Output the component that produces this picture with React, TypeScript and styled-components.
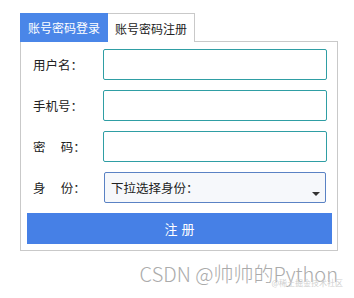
import React from "react";
import styled, { createGlobalStyle } from "styled-components";

const GlobalStyle = createGlobalStyle`
  html, body {
    margin: 0;
    padding: 0;
    background: #fff;
    font-family: "Noto Sans CJK SC", "Noto Sans", sans-serif;
  }
`;

const Page = styled.div({
  width: "354px",
  height: "298px",
  padding: "13px 16px 0 20px",
  boxSizing: "border-box",
  position: "relative",
});

const TabBar = styled.div({
  display: "flex",
  height: "29px",
});

const Tab = styled.div<{ $active?: boolean }>((p) => ({
  width: p.$active ? "88px" : "87px",
  boxSizing: "border-box",
  display: "flex",
  alignItems: "center",
  justifyContent: "center",
  fontSize: "12px",
  color: p.$active ? "#fff" : "#222",
  background: p.$active ? "#4a86e8" : "#fff",
  border: p.$active ? "none" : "1px solid #c9c9c9",
  borderBottom: "none",
  borderLeft: "none",
}));

const TabFill = styled.div({
  flex: 1,
  borderBottom: "1px solid #c9c9c9",
});

const Panel = styled.div({
  border: "1px solid #c9c9c9",
  borderTop: "none",
  padding: "7px 5px 6px 0",
  display: "flex",
  flexDirection: "column",
  gap: "10px",
});

const Row = styled.div({
  display: "flex",
  alignItems: "center",
  height: "31px",
});

const Label = styled.label({
  width: "82px",
  boxSizing: "border-box",
  paddingLeft: "12px",
  fontSize: "12.5px",
  color: "#222",
  whiteSpace: "pre",
});

const Input = styled.input({
  width: "224px",
  height: "31px",
  boxSizing: "border-box",
  border: "1px solid #2f9ea4",
  borderRadius: "2px",
  outline: "none",
  padding: "0 6px",
});

const SelectBox = styled.div({
  position: "relative",
  marginLeft: "1px",
  width: "222px",
  height: "31px",
  boxSizing: "border-box",
  border: "1px solid #5a82c4",
  borderRadius: "2px",
  background: "#f6f8fb",
  display: "flex",
  alignItems: "center",
  paddingLeft: "6px",
  fontSize: "12.5px",
  color: "#222",
});

const Caret = styled.span({
  position: "absolute",
  right: "5px",
  bottom: "6px",
  width: 0,
  height: 0,
  borderLeft: "4px solid transparent",
  borderRight: "4px solid transparent",
  borderTop: "4px solid #333",
});

const Submit = styled.button({
  marginLeft: "6px",
  height: "31px",
  border: "none",
  background: "#4680e6",
  color: "#fff",
  fontSize: "13px",
  fontFamily: "inherit",
  letterSpacing: "4px",
  textIndent: "4px",
});

const Watermark = styled.div({
  position: "absolute",
  right: "16px",
  top: "260px",
  fontSize: "20px",
  lineHeight: "27px",
  color: "#ababab",
  fontWeight: 300,
  whiteSpace: "nowrap",
});

const SubMark = styled.div({
  position: "absolute",
  right: "11px",
  top: "278px",
  fontSize: "8px",
  lineHeight: "10px",
  color: "#cfcfcf",
  whiteSpace: "nowrap",
});

const fields = [
  { label: "用户名：", type: "text" },
  { label: "手机号：", type: "text" },
  { label: "密\u2003 码：", type: "password" },
];

export default function App() {
  return (
    <>
      <GlobalStyle />
      <Page>
        <TabBar>
          <Tab $active>账号密码登录</Tab>
          <Tab>账号密码注册</Tab>
          <TabFill />
        </TabBar>
        <Panel>
          {fields.map((f) => (
            <Row key={f.label}>
              <Label>{f.label}</Label>
              <Input type={f.type} />
            </Row>
          ))}
          <Row>
            <Label>{"身\u2003 份："}</Label>
            <SelectBox>
              下拉选择身份：
              <Caret />
            </SelectBox>
          </Row>
          <Submit>注册</Submit>
        </Panel>
        <Watermark>CSDN @帅帅的Python</Watermark>
        <SubMark>@稀土掘金技术社区</SubMark>
      </Page>
    </>
  );
}
